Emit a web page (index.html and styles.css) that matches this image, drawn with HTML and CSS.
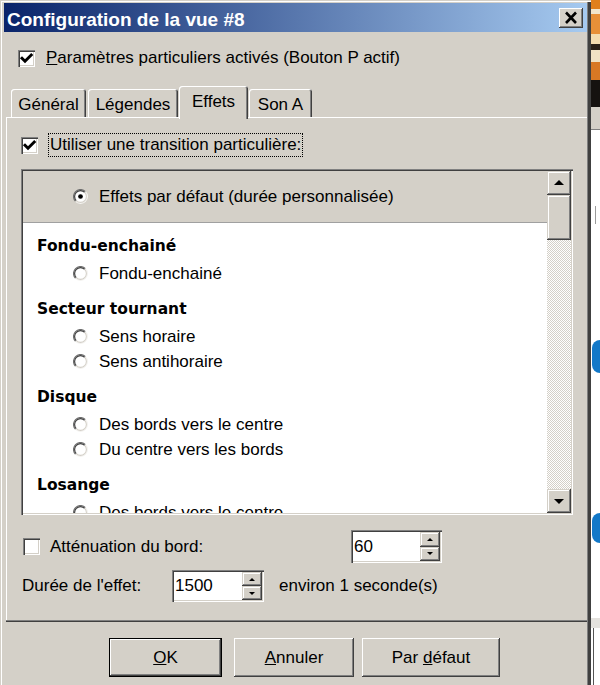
FILE: index.html
```html
<!DOCTYPE html>
<html lang="fr">
<head>
<meta charset="utf-8">
<title>Configuration de la vue #8</title>
<link rel="stylesheet" href="styles.css">
</head>
<body>
<svg class="defs" width="0" height="0" aria-hidden="true">
  <defs>
    <symbol id="radio" viewBox="0 0 14 14">
      <circle cx="7" cy="7" r="6" fill="#fff"/>
      <path d="M2.4 11.6A6.5 6.5 0 0 1 11.6 2.4" fill="none" stroke="#6e6e6e" stroke-width="1.1"/>
      <path d="M3.11 10.89A5.5 5.5 0 0 1 10.89 3.11" fill="none" stroke="#404040" stroke-width="1.1"/>
      <path d="M11.6 2.4A6.5 6.5 0 0 1 2.4 11.6" fill="none" stroke="#f4f3f0"/>
      <path d="M10.89 3.11A5.5 5.5 0 0 1 3.11 10.89" fill="none" stroke="#d4d0c8"/>
    </symbol>
    <symbol id="tick" viewBox="0 0 17 17">
      <path d="M4 8.3L7 11.3L13.2 5.1" fill="none" stroke="#000" stroke-width="2.9" stroke-linecap="square"/>
    </symbol>
  </defs>
</svg>

<div class="window">
  <div class="titlebar">
    <span class="title">Configuration de la vue #8</span>
    <span class="close">
      <svg viewBox="0 0 24 20"><path d="M7 4.5L17 15M17 4.5L7 15" stroke="#000" stroke-width="2.6" fill="none"/></svg>
    </span>
  </div>

  <div class="opt-row">
    <span class="check"><svg viewBox="0 0 17 17"><use href="#tick"/></svg></span>
    <span class="opt-label"><u>P</u>aramètres particuliers activés (Bouton P actif)</span>
  </div>

  <div class="tabs">
    <div class="tab tab-general">Général</div>
    <div class="tab tab-legendes">Légendes</div>
    <div class="tab tab-effets">Effets</div>
    <div class="tab tab-son">Son A</div>
  </div>

  <div class="panel">
    <div class="use-row">
      <span class="check"><svg viewBox="0 0 17 17"><use href="#tick"/></svg></span>
      <span class="focus">Utiliser une transition particulière:</span>
    </div>

    <div class="list">
      <div class="list-body">
        <div class="default-row">
          <svg class="radio" viewBox="0 0 14 14"><use href="#radio"/><circle cx="7" cy="7" r="2.2" fill="#000"/></svg>
          <span>Effets par défaut (durée personnalisée)</span>
        </div>
        <div class="group-title">Fondu-enchainé</div>
        <div class="opt"><svg class="radio" viewBox="0 0 14 14"><use href="#radio"/></svg><span>Fondu-enchainé</span></div>
        <div class="group-title">Secteur tournant</div>
        <div class="opt"><svg class="radio" viewBox="0 0 14 14"><use href="#radio"/></svg><span>Sens horaire</span></div>
        <div class="opt"><svg class="radio" viewBox="0 0 14 14"><use href="#radio"/></svg><span>Sens antihoraire</span></div>
        <div class="group-title">Disque</div>
        <div class="opt"><svg class="radio" viewBox="0 0 14 14"><use href="#radio"/></svg><span>Des bords vers le centre</span></div>
        <div class="opt"><svg class="radio" viewBox="0 0 14 14"><use href="#radio"/></svg><span>Du centre vers les bords</span></div>
        <div class="group-title">Losange</div>
        <div class="opt"><svg class="radio" viewBox="0 0 14 14"><use href="#radio"/></svg><span>Des bords vers le centre</span></div>
      </div>
      <div class="scrollbar">
        <div class="sb-btn"><span class="arrow-up"></span></div>
        <div class="sb-thumb"></div>
        <div class="sb-track"></div>
        <div class="sb-btn"><span class="arrow-down"></span></div>
      </div>
    </div>

    <div class="att-row">
      <span class="check"></span>
      <span class="att-label">Atténuation du bord:</span>
      <div class="spin spin-60">
        <span class="spin-field">60</span>
        <span class="spin-btns">
          <span class="spin-btn"><span class="mini-up"></span></span>
          <span class="spin-btn"><span class="mini-down"></span></span>
        </span>
      </div>
    </div>

    <div class="dur-row">
      <span class="dur-label">Durée de l'effet:</span>
      <div class="spin spin-1500">
        <span class="spin-field">1500</span>
        <span class="spin-btns">
          <span class="spin-btn"><span class="mini-up"></span></span>
          <span class="spin-btn"><span class="mini-down"></span></span>
        </span>
      </div>
      <span class="dur-note">environ 1 seconde(s)</span>
    </div>
  </div>

  <div class="buttons">
    <div class="btn btn-ok"><u>O</u>K</div>
    <div class="btn btn-cancel"><u>A</u>nnuler</div>
    <div class="btn btn-default">Par <u>d</u>éfaut</div>
  </div>
</div>

<div class="side">
  <div class="side-img"></div>
  <div class="side-bar"></div>
  <div class="side-tick"></div>
  <div class="side-blob side-blob1"></div>
  <div class="side-blob side-blob2"></div>
  <div class="side-band"></div>
  <div class="side-line"></div>
</div>
</body>
</html>
```

FILE: styles.css
```css
* { box-sizing: border-box; }
html, body { margin: 0; padding: 0; }
body {
  width: 600px;
  height: 685px;
  overflow: hidden;
  display: flex;
  background: #fff;
  font-family: "Liberation Sans", Arial, sans-serif;
  font-size: 17px;
  color: #000;
}
.defs { position: absolute; width: 0; height: 0; overflow: hidden; }

/* window frame */
.window {
  flex: none;
  width: 591px;
  height: 685px;
  background: #d4d0c8;
  padding: 3px 4px 0 4px;
  box-shadow: inset 1px 1px 0 #d4d0c8, inset 2px 2px 0 #fff,
              inset -3px 0 0 #404040, inset -4px 0 0 #808080;
  display: flex;
  flex-direction: column;
}

.titlebar {
  flex: none;
  height: 29px;
  display: flex;
  align-items: center;
  justify-content: space-between;
  padding: 0 4px 0 3px;
  background: linear-gradient(90deg, #0a246a 0%, #a6caf0 100%);
}
.title {
  color: #fff;
  font-weight: bold;
  font-size: 19px;
  line-height: 21px;
  padding-top: 4px;
  white-space: nowrap;
}
.close {
  width: 24px;
  height: 20px;
  background: #d4d0c8;
  box-shadow: inset -1px -1px 0 #404040, inset 1px 1px 0 #fff, inset -2px -2px 0 #808080;
}
.close svg { width: 24px; height: 20px; display: block; }

/* checkboxes */
.check {
  flex: none;
  width: 17px;
  height: 17px;
  background: #fff;
  box-shadow: inset 1px 1px 0 #808080, inset 2px 2px 0 #404040,
              inset -1px -1px 0 #fff, inset -2px -2px 0 #d4d0c8;
}
.check svg { width: 17px; height: 17px; display: block; }

.opt-row {
  display: flex;
  align-items: center;
  height: 24px;
  margin: 14px 0 0 14px;
  line-height: 24px;
  white-space: nowrap;
}
.opt-label { margin-left: 11px; }

/* tabs */
.tabs {
  display: flex;
  align-items: flex-end;
  height: 33px;
  margin: 16px 0 -2px 7px;
  position: relative;
  z-index: 1;
}
.tab {
  height: 28px;
  margin-bottom: 2px;
  padding-top: 3px;
  line-height: 25px;
  text-align: center;
  white-space: nowrap;
  background: #d4d0c8;
  border-radius: 3px 3px 0 0;
  box-shadow: inset 1px 1px 0 #fff, inset -1px 0 0 #404040, inset -2px 0 0 #808080;
}
.tab-general { width: 75px; }
.tab-legendes { width: 90px; margin-left: 2px; }
.tab-effets { width: 69px; margin-left: 1px; height: 33px; margin-bottom: 0; }
.tab-son { width: 63px; margin-left: 1px; }

/* panel */
.panel {
  margin-left: 2px;
  padding: 16px 14px 20px 15px;
  background: #d4d0c8;
  box-shadow: inset 0 -1px 0 #404040, inset 0 -2px 0 #808080,
              inset 1px 1px 0 #fff;
}
.use-row {
  display: flex;
  align-items: center;
  height: 24px;
}
.focus {
  margin-left: 10px;
  height: 24px;
  line-height: 22px;
  padding: 0 1px;
  border: 1px dotted #000;
  white-space: nowrap;
}

/* list */
.list {
  display: flex;
  height: 346px;
  margin-top: 12px;
  padding: 2px;
  background: #fff;
  box-shadow: inset 1px 1px 0 #808080, inset 2px 2px 0 #404040,
              inset -1px -1px 0 #fff, inset -2px -2px 0 #d4d0c8;
}
.list-body {
  flex: 1;
  overflow: hidden;
  background: #fff;
  white-space: nowrap;
}
.default-row {
  height: 52px;
  display: flex;
  align-items: center;
  padding-left: 50px;
  background: #d4d0c8;
  border-bottom: 1px solid #a0a0a0;
}
.group-title {
  font-family: "DejaVu Sans", Verdana, sans-serif;
  font-weight: bold;
  font-size: 15.5px;
  line-height: 20px;
  padding: 13px 0 5px 14px;
}
.opt {
  height: 25px;
  display: flex;
  align-items: center;
  padding-left: 50px;
  line-height: 25px;
}
.radio { flex: none; width: 15px; height: 15px; margin-right: 11px; display: block; }

/* scrollbar */
.scrollbar {
  flex: none;
  width: 24px;
  display: flex;
  flex-direction: column;
  background: repeating-conic-gradient(#fff 0 25%, #d4d0c8 0 50%) 0 0 / 2px 2px;
}
.sb-btn, .sb-thumb, .spin-btn {
  background: #d4d0c8;
  box-shadow: inset -1px -1px 0 #404040, inset 1px 1px 0 #d4d0c8,
              inset -2px -2px 0 #808080, inset 2px 2px 0 #fff;
}
.sb-btn {
  flex: none;
  height: 24px;
  display: flex;
  align-items: center;
  justify-content: center;
}
.sb-thumb { flex: none; height: 45px; }
.sb-track { flex: 1; }
.arrow-up, .arrow-down {
  width: 0; height: 0;
  border-left: 5px solid transparent;
  border-right: 5px solid transparent;
}
.arrow-up { border-bottom: 5px solid #000; margin-top: -1px; }
.arrow-down { border-top: 5px solid #000; }

/* bottom fields */
.att-row {
  display: flex;
  align-items: center;
  height: 33px;
  margin-top: 15px;
  white-space: nowrap;
}
.att-row .check { margin-left: 2px; }
.att-label { flex: none; width: 301px; margin-left: 10px; }

.dur-row {
  display: flex;
  align-items: center;
  height: 32px;
  margin-top: 7px;
  white-space: nowrap;
}
.dur-label { flex: none; width: 151px; padding-left: 1px; }
.dur-note { margin-left: 15px; }

.spin {
  flex: none;
  display: flex;
  height: 100%;
  padding: 2px;
  background: #fff;
  box-shadow: inset 1px 1px 0 #808080, inset 2px 2px 0 #404040,
              inset -1px -1px 0 #fff, inset -2px -2px 0 #d4d0c8;
}
.spin-60 { width: 91px; }
.spin-1500 { width: 92px; }
.spin-field { flex: 1; padding-left: 1px; line-height: 29px; }
.spin-1500 .spin-field { line-height: 28px; }
.spin-btns { flex: none; width: 20px; display: flex; flex-direction: column; }
.spin-btn { flex: 1; display: flex; align-items: center; justify-content: center; }
.mini-up, .mini-down {
  width: 0; height: 0;
  border-left: 3px solid transparent;
  border-right: 3px solid transparent;
}
.mini-up { border-bottom: 3px solid #000; }
.mini-down { border-top: 3px solid #000; }

/* buttons */
.buttons {
  display: flex;
  margin-top: 16px;
  padding-left: 105px;
}
.btn {
  height: 39px;
  line-height: 39px;
  text-align: center;
  white-space: nowrap;
  background: #d4d0c8;
  box-shadow: inset -1px -1px 0 #404040, inset 1px 1px 0 #fff,
              inset -2px -2px 0 #808080, inset 2px 2px 0 #d4d0c8;
}
.btn-ok { width: 113px; border: 1px solid #000; line-height: 37px; }
.btn-cancel { width: 120px; margin-left: 12px; }
.btn-default { width: 138px; margin-left: 8px; }

/* desktop strip beside the dialog */
.side {
  flex: 1;
  display: flex;
  flex-direction: column;
  background: #fff;
}
.side-img {
  flex: none;
  height: 107px;
  background: linear-gradient(180deg, #e0801c 0 9px, #f2e6cc 9px 14px, #e89038 14px 34px,
              #f4dcb0 34px 44px, #2a2018 44px 50px, #f0e2c4 50px 62px, #d87824 62px 80px,
              #151210 80px 107px);
}
.side-bar { flex: none; height: 23px; background: #d4d0c8; border-bottom: 1px solid #808080; }
.side-tick { flex: none; width: 1px; height: 18px; margin: 76px 0 0 4px; background: #9a9a9a; }
.side-blob {
  flex: none;
  width: 8px;
  margin-left: 1px;
  background: #1278c8;
  border-radius: 10px 0 0 10px;
}
.side-blob1 { height: 33px; margin-top: 116px; }
.side-blob2 { height: 30px; margin-top: 140px; }
.side-band { flex: none; height: 10px; margin-top: 75px; background: #e4e2de; }
.side-line { flex: 1; margin-left: 2px; border-left: 1px solid #555; }
```
